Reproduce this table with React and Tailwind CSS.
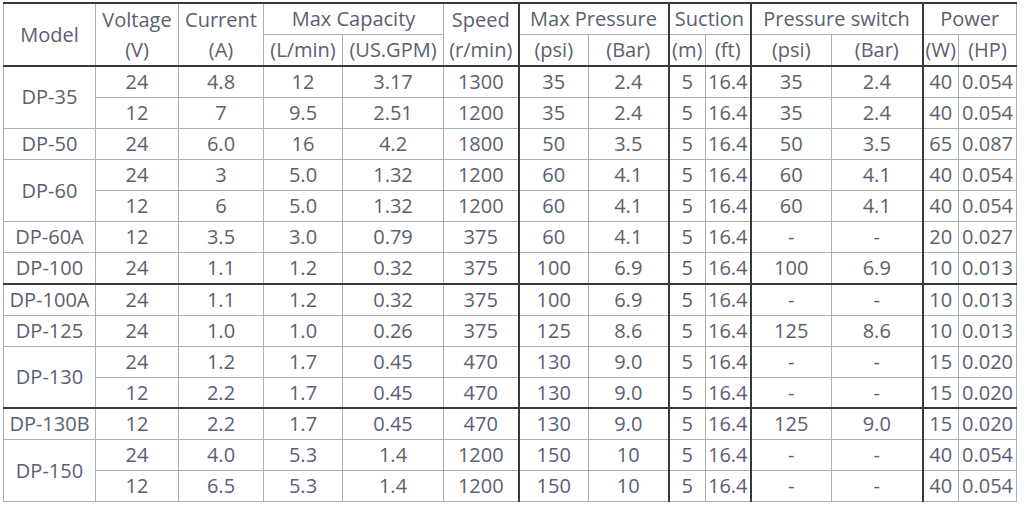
import React from 'react'

const cols = [92, 83, 85, 79, 101, 75, 70, 80, 37, 45, 81, 91, 36, 58]
// columns whose right edge is a dark rule (index in a full row incl. model)
const darkRight = [5, 7, 9, 11]

const models = [
  { name: 'DP-35', rows: [
    ['24', '4.8', '12', '3.17', '1300', '35', '2.4', '5', '16.4', '35', '2.4', '40', '0.054'],
    ['12', '7', '9.5', '2.51', '1200', '35', '2.4', '5', '16.4', '35', '2.4', '40', '0.054'],
  ] },
  { name: 'DP-50', rows: [
    ['24', '6.0', '16', '4.2', '1800', '50', '3.5', '5', '16.4', '50', '3.5', '65', '0.087'],
  ] },
  { name: 'DP-60', rows: [
    ['24', '3', '5.0', '1.32', '1200', '60', '4.1', '5', '16.4', '60', '4.1', '40', '0.054'],
    ['12', '6', '5.0', '1.32', '1200', '60', '4.1', '5', '16.4', '60', '4.1', '40', '0.054'],
  ] },
  { name: 'DP-60A', rows: [
    ['12', '3.5', '3.0', '0.79', '375', '60', '4.1', '5', '16.4', '-', '-', '20', '0.027'],
  ] },
  { name: 'DP-100', rows: [
    ['24', '1.1', '1.2', '0.32', '375', '100', '6.9', '5', '16.4', '100', '6.9', '10', '0.013'],
  ] },
  { name: 'DP-100A', dark: true, rows: [
    ['24', '1.1', '1.2', '0.32', '375', '100', '6.9', '5', '16.4', '-', '-', '10', '0.013'],
  ] },
  { name: 'DP-125', rows: [
    ['24', '1.0', '1.0', '0.26', '375', '125', '8.6', '5', '16.4', '125', '8.6', '10', '0.013'],
  ] },
  { name: 'DP-130', rows: [
    ['24', '1.2', '1.7', '0.45', '470', '130', '9.0', '5', '16.4', '-', '-', '15', '0.020'],
    ['12', '2.2', '1.7', '0.45', '470', '130', '9.0', '5', '16.4', '-', '-', '15', '0.020'],
  ] },
  { name: 'DP-130B', dark: true, rows: [
    ['12', '2.2', '1.7', '0.45', '470', '130', '9.0', '5', '16.4', '125', '9.0', '15', '0.020'],
  ] },
  { name: 'DP-150', rows: [
    ['24', '4.0', '5.3', '1.4', '1200', '150', '10', '5', '16.4', '-', '-', '40', '0.054'],
    ['12', '6.5', '5.3', '1.4', '1200', '150', '10', '5', '16.4', '-', '-', '40', '0.054'],
  ] },
]

const cell = 'border border-[#a4b2af] p-0 text-center align-middle font-normal whitespace-nowrap'
const dr = 'border-r-2 border-r-[#343c3b]'
const dt = 'border-t-2 border-t-[#343c3b]'

const App = () => {
  return (
    <div className="w-[1024px] h-[510px] bg-white pl-[3px] pt-[2px]">
      <table
        className="table-fixed border-collapse text-[20px] text-[#59616f] leading-[20px]"
        style={{ fontFamily: '"Open Sans", "Noto Sans", sans-serif' }}
      >
        <colgroup>
          {cols.map((w, i) => (
            <col key={i} style={{ width: w }} />
          ))}
        </colgroup>
        <thead>
          <tr className="h-[31px]">
            <th rowSpan={2} className={`${cell} ${dt}`}>Model</th>
            <th rowSpan={2} className={`${cell} ${dt} leading-[30px]`}>Voltage<br />(V)</th>
            <th rowSpan={2} className={`${cell} ${dt} leading-[30px]`}>Current<br />(A)</th>
            <th colSpan={2} className={`${cell} ${dt}`}>Max Capacity</th>
            <th className={`${cell} ${dt} ${dr} leading-[30px]`} rowSpan={2}>Speed<br />(r/min)</th>
            <th colSpan={2} className={`${cell} ${dt} ${dr}`}>Max Pressure</th>
            <th colSpan={2} className={`${cell} ${dt} ${dr}`}>Suction</th>
            <th colSpan={2} className={`${cell} ${dt} ${dr}`}>Pressure switch</th>
            <th colSpan={2} className={`${cell} ${dt}`}>Power</th>
          </tr>
          <tr className="h-[32px]">
            <th className={cell}>(L/min)</th>
            <th className={cell}>(US.GPM)</th>
            <th className={cell}>(psi)</th>
            <th className={`${cell} ${dr}`}>(Bar)</th>
            <th className={cell}>(m)</th>
            <th className={`${cell} ${dr}`}>(ft)</th>
            <th className={cell}>(psi)</th>
            <th className={`${cell} ${dr}`}>(Bar)</th>
            <th className={cell}>(W)</th>
            <th className={cell}>(HP)</th>
          </tr>
        </thead>
        <tbody>
          {models.map((m, mi) =>
            m.rows.map((r, ri) => {
              const top = (mi === 0 && ri === 0) || (m.dark && ri === 0)
              return (
                <tr key={`${m.name}-${ri}`} className="h-[31.14px]">
                  {ri === 0 && (
                    <td rowSpan={m.rows.length} className={`${cell} ${top ? dt : ''}`}>
                      {m.name}
                    </td>
                  )}
                  {r.map((v, ci) => (
                    <td
                      key={ci}
                      className={`${cell} ${darkRight.includes(ci + 1) ? dr : ''} ${top ? dt : ''}`}
                    >
                      {v}
                    </td>
                  ))}
                </tr>
              )
            })
          )}
        </tbody>
      </table>
    </div>
  )
}

export default App
